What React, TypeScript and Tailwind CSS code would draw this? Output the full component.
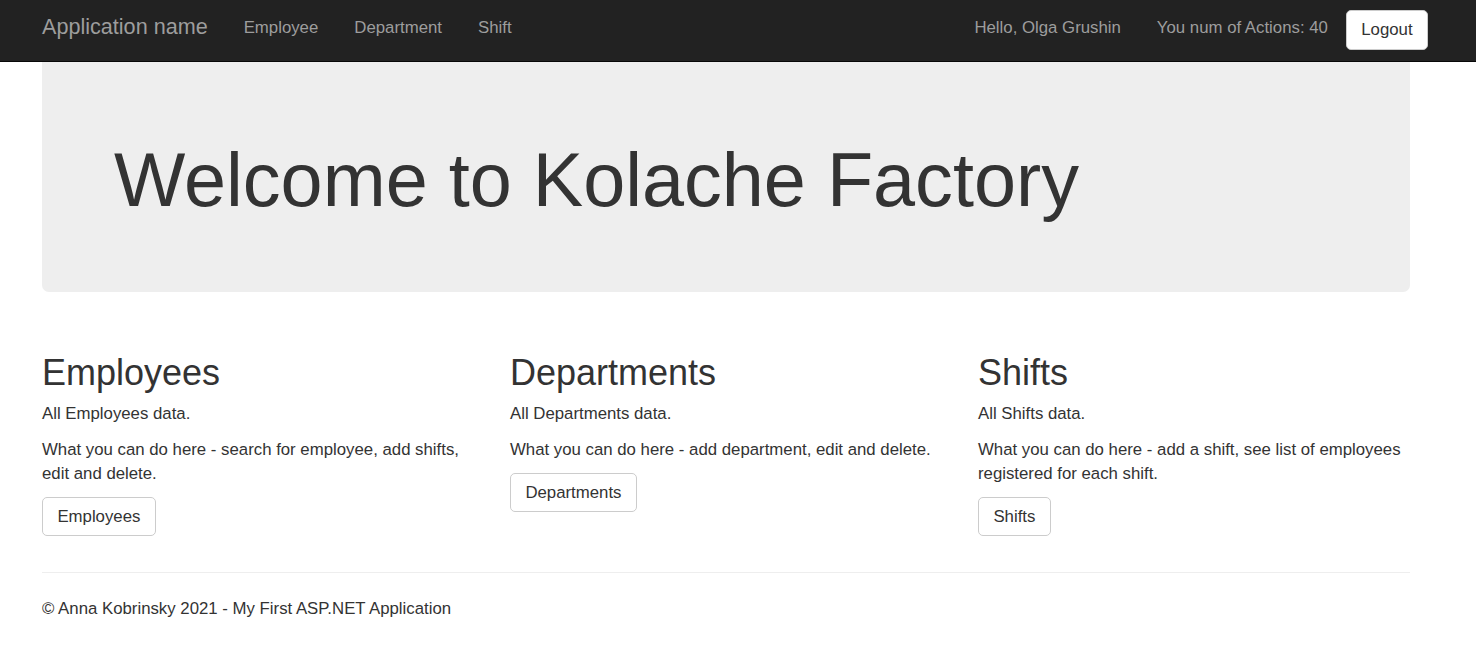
/**
 * Kolache Factory — home page (ASP.NET / Bootstrap look)
 */

const NAV_LINKS = ["Employee", "Department", "Shift"];

const SECTIONS = [
  {
    title: "Employees",
    lead: "All Employees data.",
    text: "What you can do here - search for employee, add shifts, edit and delete.",
    button: "Employees",
  },
  {
    title: "Departments",
    lead: "All Departments data.",
    text: "What you can do here - add department, edit and delete.",
    button: "Departments",
  },
  {
    title: "Shifts",
    lead: "All Shifts data.",
    text: "What you can do here - add a shift, see list of employees registered for each shift.",
    button: "Shifts",
  },
];

function Navbar() {
  return (
    <nav className="box-border flex h-[62px] items-start justify-between border-b border-[#080808] bg-[#222] pr-[48px] pl-[24px]">
      <div className="flex items-start">
        <a className="px-[18px] pt-[15px] text-[21.6px] leading-6 text-[#9d9d9d]">Application name</a>
        {NAV_LINKS.map((label) => (
          <a key={label} className="px-[18px] pt-[16px] text-[16.8px] leading-6 text-[#9d9d9d]">
            {label}
          </a>
        ))}
      </div>
      <div className="flex items-start">
        <span className="px-[18px] pt-[16px] text-[16.8px] leading-6 text-[#9d9d9d]">Hello, Olga Grushin</span>
        <span className="px-[18px] pt-[16px] text-[16.8px] leading-6 text-[#9d9d9d]">You num of Actions: 40</span>
        <button className="mt-[10px] box-border flex h-[40px] items-center rounded-[5px] border border-[#ccc] bg-white px-[14.4px] text-[16.8px] leading-6 text-[#333]">
          Logout
        </button>
      </div>
    </nav>
  );
}

export default function App() {
  return (
    <div className="min-h-[668px] bg-white font-['Liberation_Sans',Arial,sans-serif] text-[#333]">
      <Navbar />

      <div className="pr-[66px] pl-[42px]">
        {/* Jumbotron */}
        <div className="rounded-b-[7px] bg-[#eee] pt-[77px] pb-[70px] pl-[72px]">
          <h1 className="text-[75.6px] leading-[83px] font-normal">Welcome to Kolache Factory</h1>
        </div>

        {/* Three columns */}
        <div className="mt-[61px] grid grid-cols-3 gap-x-[36px]">
          {SECTIONS.map((s) => (
            <div key={s.title} className="text-[16.8px] leading-6">
              <h2 className="mb-[9px] text-[36px] leading-[40px] font-normal">{s.title}</h2>
              <p className="mb-[12px]">{s.lead}</p>
              <p className="mb-[11px]">{s.text}</p>
              <button className="box-border flex h-[39px] items-center rounded-[5px] border border-[#ccc] bg-white px-[14.4px] text-[#333]">
                {s.button}
              </button>
            </div>
          ))}
        </div>

        <hr className="mt-[36px] border-t border-[#eee]" />
        <footer className="mt-[24px] text-[16.8px] leading-6">
          <p>&copy; Anna Kobrinsky 2021 - My First ASP.NET Application</p>
        </footer>
      </div>
    </div>
  );
}
